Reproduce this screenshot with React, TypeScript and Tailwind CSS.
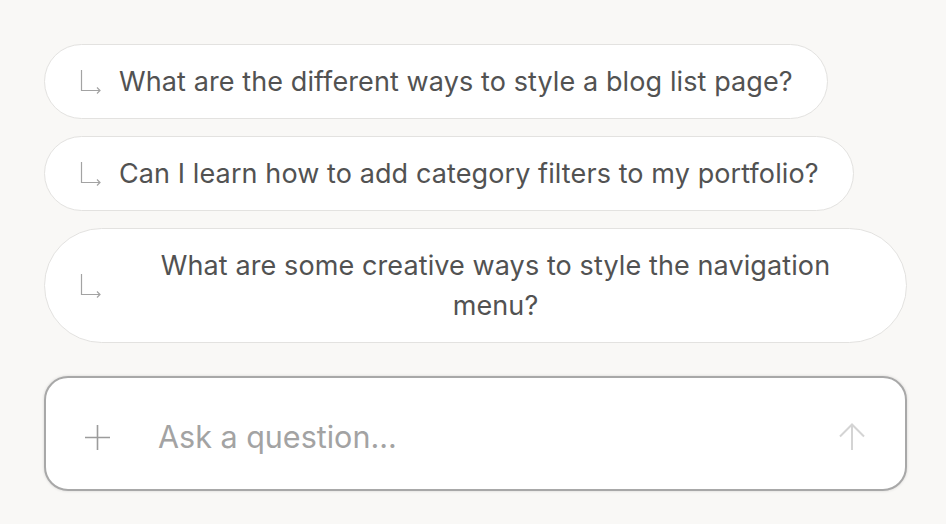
import * as React from "react";

const suggestions = [
  "What are the different ways to style a blog list page?",
  "Can I learn how to add category filters to my portfolio?",
  "What are some creative ways to style the navigation menu?",
];

function CornerArrow() {
  return (
    <svg width="24" height="26" viewBox="0 0 24 26" fill="none" className="shrink-0">
      <path d="M2.5 1v20.5H21" stroke="#a3a3a3" strokeWidth="1.2" />
      <path d="M18 18.5l3 3-3 3" stroke="#a3a3a3" strokeWidth="1.2" />
    </svg>
  );
}

export default function App() {
  const [value, setValue] = React.useState("");

  return (
    <div
      className="min-h-[524px] w-full bg-[#f9f8f6] pl-[44px] pr-[39px] pt-[44px]"
      style={{ fontFamily: "Inter, 'Noto Sans', sans-serif" }}
    >
      {/* Suggestions */}
      <div className="flex flex-col items-start gap-[17px]">
        {suggestions.map((s) => (
          <button
            key={s}
            type="button"
            className="flex max-w-full items-center gap-[16px] rounded-full border border-[#e3e2e0] bg-white py-[16.5px] pl-[34px] pr-[34px] text-[27px] leading-10 tracking-[0.1px] text-[#525252]"
          >
            <CornerArrow />
            <span className="text-center">{s}</span>
          </button>
        ))}
      </div>

      {/* Input */}
      <div className="mt-[33px] flex h-[115px] items-center rounded-[24px] border-2 border-[#a8a8a8] bg-white pl-[38px] pr-[38px] pt-[7px] shadow-[0_0_3px_rgba(0,0,0,0.15)]">
        <button type="button" className="shrink-0 text-[#9c9c9c]">
          <svg width="27" height="27" viewBox="0 0 27 27" fill="none">
            <path d="M13.5 1v25M1 13.5h25" stroke="currentColor" strokeWidth="1.6" />
          </svg>
        </button>
        <input
          value={value}
          onChange={(e) => setValue(e.target.value)}
          placeholder="Ask a question..."
          autoFocus
          className="ml-[47px] flex-1 bg-transparent text-[30.5px] text-[#333] caret-[#222] outline-none placeholder:text-[#a3a3a3]"
        />
        <button type="button" className="shrink-0 text-[#d4d4d4]">
          <svg width="30" height="30" viewBox="0 0 30 30" fill="none">
            <path d="M15 28V3M3 14.5L15 2.5l12 12" stroke="currentColor" strokeWidth="2" />
          </svg>
        </button>
      </div>
    </div>
  );
}
